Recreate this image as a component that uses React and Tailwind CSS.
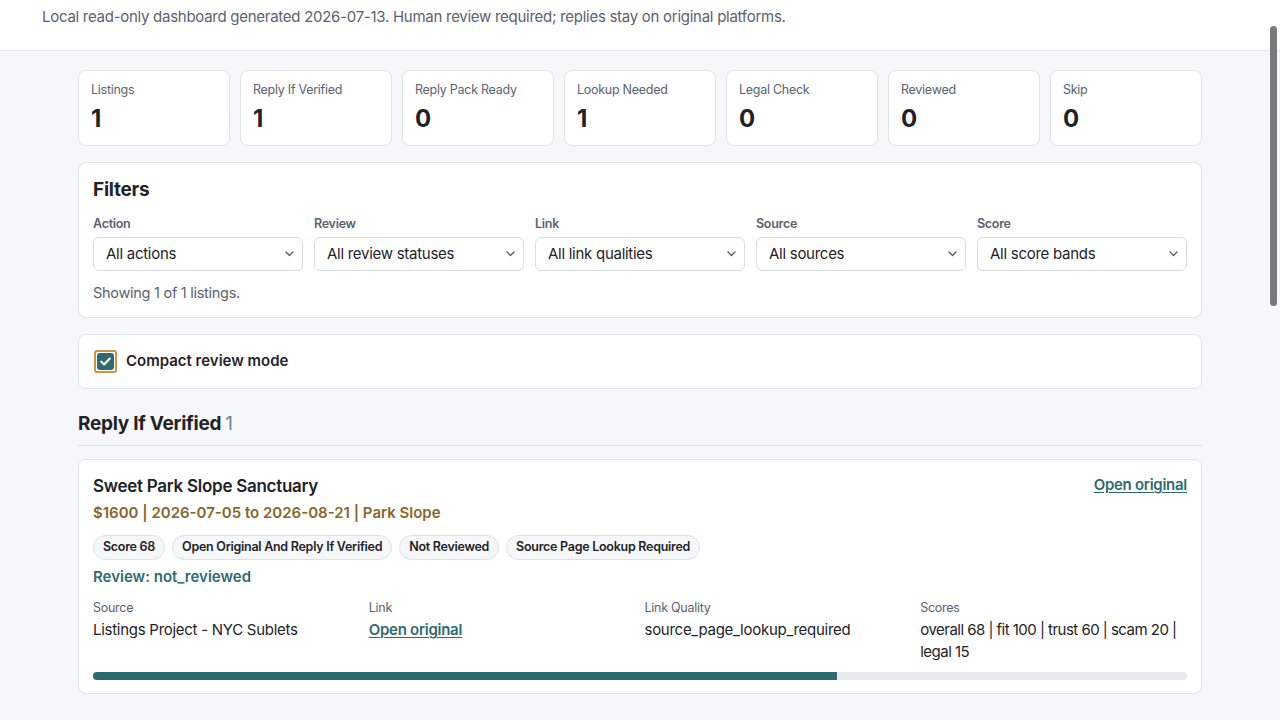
import React, { useState } from "react";

const stats = [
  { label: "Listings", value: 1 },
  { label: "Reply If Verified", value: 1 },
  { label: "Reply Pack Ready", value: 0 },
  { label: "Lookup Needed", value: 1 },
  { label: "Legal Check", value: 0 },
  { label: "Reviewed", value: 0 },
  { label: "Skip", value: 0 },
];

const filters = [
  { label: "Action", value: "All actions" },
  { label: "Review", value: "All review statuses" },
  { label: "Link", value: "All link qualities" },
  { label: "Source", value: "All sources" },
  { label: "Score", value: "All score bands" },
];

const chips = [
  "Score 68",
  "Open Original And Reply If Verified",
  "Not Reviewed",
  "Source Page Lookup Required",
];

const Chevron = () => (
  <svg
    className="pointer-events-none absolute right-[9px] top-1/2 -translate-y-1/2 text-[#4b5563]"
    width="9"
    height="6"
    viewBox="0 0 9 6"
    fill="none"
  >
    <path d="M1 1l3.5 3.5L8 1" stroke="currentColor" strokeWidth="1.2" strokeLinecap="round" strokeLinejoin="round" />
  </svg>
);

const App = () => {
  const [compact, setCompact] = useState(true);

  return (
    <div className="min-h-screen bg-[#f6f7f9] text-[#1f2328] font-['Inter',sans-serif] tracking-[-0.017em]">
      {/* Header */}
      <header className="bg-white border-b border-[#e3e6ea] pt-[7px] pb-[23px] px-[42px]">
        <p className="text-[15px] leading-[20px] text-[#5b6270]">
          Local read-only dashboard generated 2026-07-13. Human review required; replies stay on original platforms.
        </p>
      </header>

      <main className="max-w-[1124px] mx-auto pt-[19px] pb-10 flex flex-col gap-4">
        {/* Stat tiles */}
        <div className="grid grid-cols-7 gap-[10px]">
          {stats.map((s) => (
            <div key={s.label} className="bg-white border border-[#e1e4e8] rounded-lg px-3 pt-[11px] h-[76px]">
              <div className="text-[12.5px] leading-[16px] text-[#5b6270]">{s.label}</div>
              <div className="text-[24px] leading-[30px] font-bold mt-[6px] text-[#1f2328]">{s.value}</div>
            </div>
          ))}
        </div>

        {/* Filters */}
        <section className="bg-white border border-[#e1e4e8] rounded-lg px-[14px] pt-[14px] pb-[14px]">
          <h2 className="text-[19px] leading-[26px] font-bold">Filters</h2>
          <div className="grid grid-cols-5 gap-[11px] mt-[13px]">
            {filters.map((f) => (
              <label key={f.label} className="flex flex-col">
                <span className="text-[12.5px] leading-[16px] font-semibold text-[#5b6270] mb-[5px]">{f.label}</span>
                <span className="relative block">
                  <select
                    defaultValue={f.value}
                    className="appearance-none w-full h-[34px] bg-white border border-[#d9dde2] rounded-md pl-3 pr-6 text-[15px] text-[#1f2328] outline-none"
                  >
                    <option>{f.value}</option>
                  </select>
                  <Chevron />
                </span>
              </label>
            ))}
          </div>
          <p className="text-[14.5px] leading-[20px] text-[#5b6270] mt-[12px]">Showing 1 of 1 listings.</p>
        </section>

        {/* Compact toggle */}
        <section className="bg-white border border-[#e1e4e8] rounded-lg px-[15px] h-[55px] flex items-center">
          <label className="flex items-center gap-[9px] cursor-pointer">
            <span className="w-[23px] h-[23px] rounded-[3px] border-2 border-[#c9983c] flex items-center justify-center">
              <span className="w-[17px] h-[17px] rounded-[3px] bg-[#2f6a71] flex items-center justify-center">
                {compact && (
                  <svg width="11" height="9" viewBox="0 0 11 9" fill="none">
                    <path d="M1.2 4.6l2.9 2.9L9.8 1.5" stroke="white" strokeWidth="2" strokeLinecap="round" strokeLinejoin="round" />
                  </svg>
                )}
              </span>
            </span>
            <input type="checkbox" className="hidden" checked={compact} onChange={() => setCompact(!compact)} />
            <span className="text-[15px] font-semibold text-[#1f2328] tracking-normal">Compact review mode</span>
          </label>
        </section>

        {/* Group: Reply If Verified */}
        <section className="mt-[6px]">
          <h3 className="text-[19px] leading-[26px] font-bold pb-[8px] border-b border-[#d9dde2]">
            Reply If Verified <span className="font-normal text-[#6f8790]">1</span>
          </h3>

          <article className="bg-white border border-[#e1e4e8] rounded-lg mt-[13px] px-[14px] pt-[15px] pb-[13px]">
            <div className="flex justify-between items-start">
              <div>
                <h4 className="text-[17px] leading-[22px] font-semibold">Sweet Park Slope Sanctuary</h4>
                <div className="text-[15px] leading-[20px] font-semibold text-[#8a652d] mt-[6px] tracking-normal">
                  $1600 | 2026-07-05 to 2026-08-21 | Park Slope
                </div>
              </div>
              <a href="#" className="text-[15px] leading-[20px] font-semibold text-[#2f6a71] underline underline-offset-2">
                Open original
              </a>
            </div>

            <div className="flex gap-[7px] mt-[12px]">
              {chips.map((c) => (
                <span key={c} className="h-[25px] px-[9px] rounded-full border border-[#dde1e6] bg-[#f6f7f9] text-[12.5px] font-semibold text-[#1f2328] flex items-center">
                  {c}
                </span>
              ))}
            </div>

            <div className="text-[15px] leading-[20px] font-semibold text-[#2f6a71] mt-[7px] tracking-normal">Review: not_reviewed</div>

            <div className="grid grid-cols-4 gap-[9px] mt-[13px]">
              <div>
                <div className="text-[12.5px] leading-[16px] text-[#5b6270]">Source</div>
                <div className="text-[15px] leading-[22px] mt-[3px]">Listings Project - NYC Sublets</div>
              </div>
              <div>
                <div className="text-[12.5px] leading-[16px] text-[#5b6270]">Link</div>
                <a href="#" className="block text-[15px] leading-[22px] mt-[3px] font-semibold text-[#2f6a71] underline underline-offset-2">
                  Open original
                </a>
              </div>
              <div>
                <div className="text-[12.5px] leading-[16px] text-[#5b6270]">Link Quality</div>
                <div className="text-[15px] leading-[22px] mt-[3px]">source_page_lookup_required</div>
              </div>
              <div>
                <div className="text-[12.5px] leading-[16px] text-[#5b6270]">Scores</div>
                <div className="text-[15px] leading-[22px] mt-[3px] tracking-[-0.035em]">
                  overall 68 | fit 100 | trust 60 | scam 20 | legal 15
                </div>
              </div>
            </div>

            <div className="h-[8px] rounded-full bg-[#e6e9ed] mt-[9px] overflow-hidden">
              <div className="h-full bg-[#2f6a71]" style={{ width: "68%" }} />
            </div>
          </article>
        </section>
      </main>

      {/* overlay scrollbar thumb */}
      <div className="fixed right-[3px] top-[26px] w-[7px] h-[280px] rounded-full bg-[#7a7a7a]" />
    </div>
  );
};

export default App;
